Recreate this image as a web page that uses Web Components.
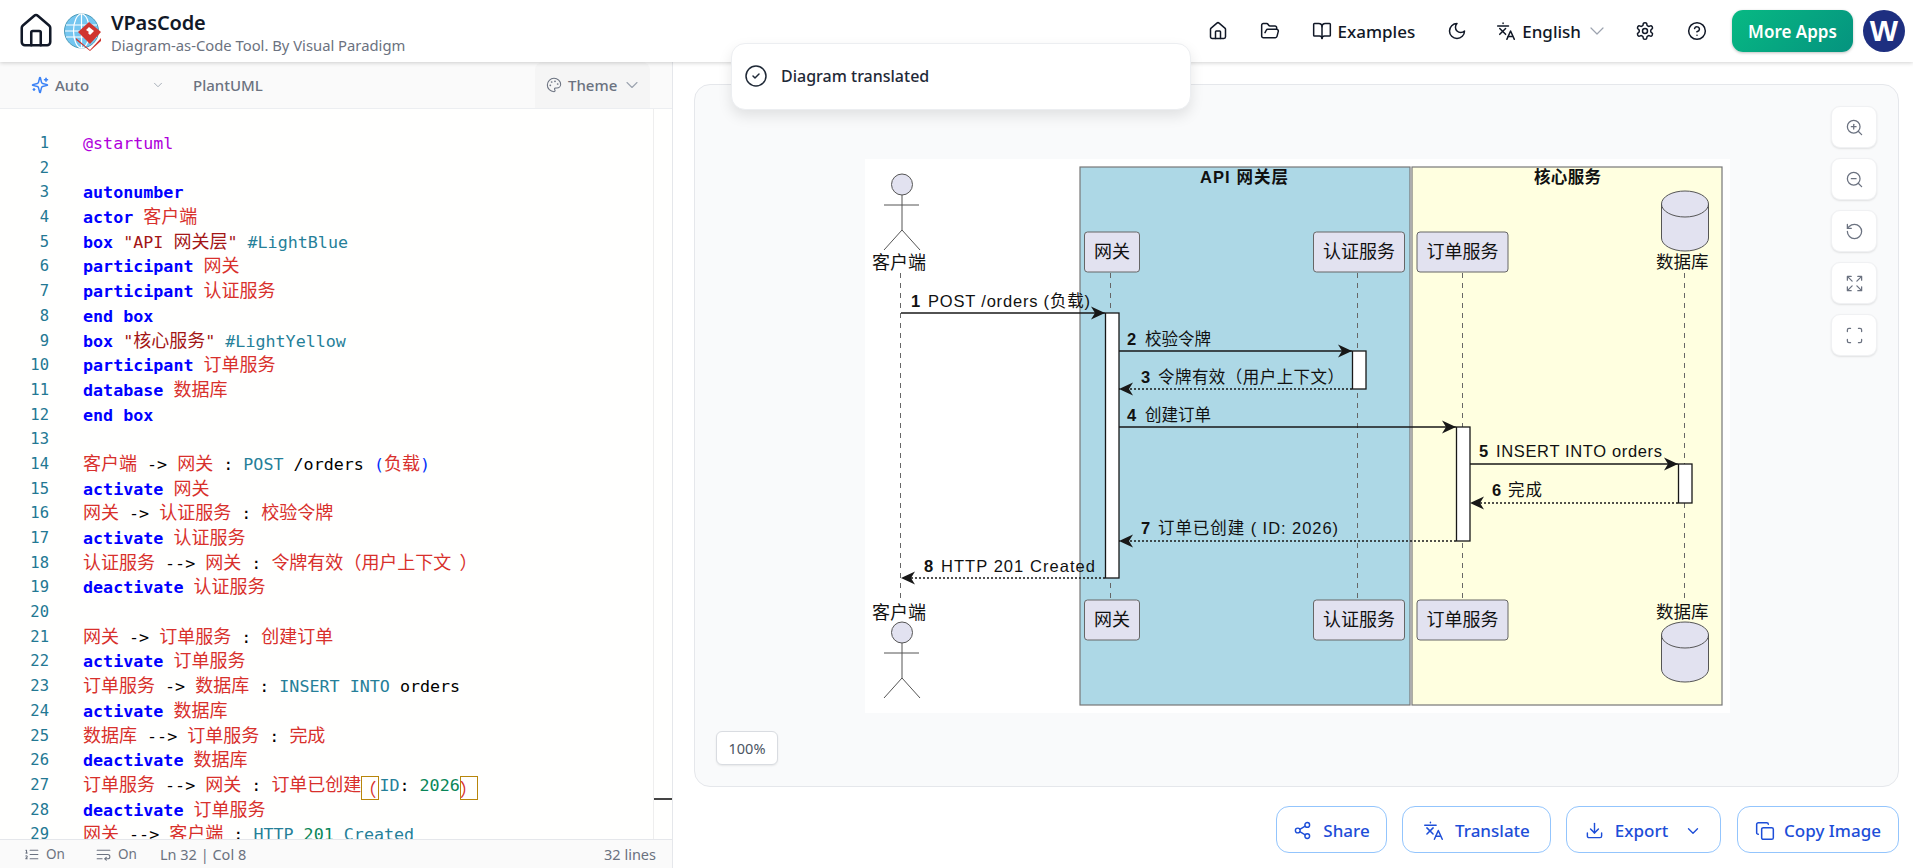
<!DOCTYPE html>
<html lang="en">
<head>
<meta charset="utf-8">
<title>VPasCode</title>
<style>
  html, body { margin: 0; height: 100%; overflow: hidden; background: #fff; }
  body { font-family: "Noto Sans", "Noto Sans CJK SC", sans-serif; color: #111827; }
</style>
</head>
<body>
<app-shell>
  <top-bar slot="top"></top-bar>
  <editor-pane slot="left"></editor-pane>
  <preview-pane slot="right"></preview-pane>
  <toast-note slot="overlay">Diagram translated</toast-note>
</app-shell>

<script>
// lucide style icon set, all on a 24 box
const ICONS = {
  house: '<path d="M15 21v-8a1 1 0 0 0-1-1h-4a1 1 0 0 0-1 1v8"/><path d="M3 10a2 2 0 0 1 .709-1.528l7-5.999a2 2 0 0 1 2.582 0l7 5.999A2 2 0 0 1 21 10v9a2 2 0 0 1-2 2H5a2 2 0 0 1-2-2z"/>',
  folder: '<path d="m6 14 1.5-2.9A2 2 0 0 1 9.24 10H20a2 2 0 0 1 1.94 2.5l-1.54 6a2 2 0 0 1-1.95 1.5H4a2 2 0 0 1-2-2V5a2 2 0 0 1 2-2h3.9a2 2 0 0 1 1.69.9l.81 1.2a2 2 0 0 0 1.69.9H18a2 2 0 0 1 2 2v2"/>',
  book: '<path d="M12 7v14"/><path d="M3 18a1 1 0 0 1-1-1V4a1 1 0 0 1 1-1h5a4 4 0 0 1 4 4 4 4 0 0 1 4-4h5a1 1 0 0 1 1 1v13a1 1 0 0 1-1 1h-6a3 3 0 0 0-3 3 3 3 0 0 0-3-3z"/>',
  moon: '<path d="M12 3a6 6 0 0 0 9 9 9 9 0 1 1-9-9Z"/>',
  lang: '<path d="M2 6h13"/><path d="M8.5 2.5v.6"/><path d="M4.5 9l7 7"/><path d="M11.5 9l-7 7"/><path d="M13 22l4.500-10 4.500 10"/><path d="M14.500 18.500h5"/>',
  gear: '<path d="M12.22 2h-.44a2 2 0 0 0-2 2v.18a2 2 0 0 1-1 1.73l-.43.25a2 2 0 0 1-2 0l-.15-.08a2 2 0 0 0-2.73.73l-.22.38a2 2 0 0 0 .73 2.73l.15.1a2 2 0 0 1 1 1.72v.51a2 2 0 0 1-1 1.74l-.15.09a2 2 0 0 0-.73 2.73l.22.38a2 2 0 0 0 2.73.73l.15-.08a2 2 0 0 1 2 0l.43.25a2 2 0 0 1 1 1.73V20a2 2 0 0 0 2 2h.44a2 2 0 0 0 2-2v-.18a2 2 0 0 1 1-1.73l.43-.25a2 2 0 0 1 2 0l.15.08a2 2 0 0 0 2.73-.73l.22-.39a2 2 0 0 0-.73-2.73l-.15-.08a2 2 0 0 1-1-1.74v-.5a2 2 0 0 1 1-1.74l.15-.09a2 2 0 0 0 .73-2.73l-.22-.38a2 2 0 0 0-2.73-.73l-.15.08a2 2 0 0 1-2 0l-.43-.25a2 2 0 0 1-1-1.73V4a2 2 0 0 0-2-2z"/><circle cx="12" cy="12" r="3"/>',
  help: '<circle cx="12" cy="12" r="10"/><path d="M9.09 9a3 3 0 0 1 5.83 1c0 2-3 3-3 3"/><path d="M12 17h.01"/>',
  sparkles: '<path d="M9.937 15.5A2 2 0 0 0 8.5 14.063l-6.135-1.582a.5.5 0 0 1 0-.962L8.5 9.936A2 2 0 0 0 9.937 8.5l1.582-6.135a.5.5 0 0 1 .963 0L14.063 8.5A2 2 0 0 0 15.5 9.937l6.135 1.581a.5.5 0 0 1 0 .964L15.5 14.063a2 2 0 0 0-1.437 1.437l-1.582 6.135a.5.5 0 0 1-.963 0z"/><path d="M20 3v4"/><path d="M22 5h-4"/><path d="M4 17v2"/><path d="M5 18H3"/>',
  palette: '<circle cx="13.5" cy="6.5" r=".5" fill="currentColor"/><circle cx="17.500" cy="10.500" r=".5" fill="currentColor"/><circle cx="8.500" cy="7.500" r=".5" fill="currentColor"/><circle cx="6.500" cy="12.500" r=".5" fill="currentColor"/><path d="M12 2C6.5 2 2 6.5 2 12s4.500 10 10 10c.926 0 1.648-.746 1.648-1.688 0-.437-.18-.835-.437-1.125-.29-.289-.438-.652-.438-1.125a1.64 1.64 0 0 1 1.668-1.668h1.996c3.051 0 5.555-2.503 5.555-5.554C21.965 6.012 17.461 2 12 2z"/>',
  chevron: '<path d="m6 9 6 6 6-6"/>',
  check: '<circle cx="12" cy="12" r="10"/><path d="m9 12 2 2 4-4"/>',
  list: '<path d="M10 12h11"/><path d="M10 18h11"/><path d="M10 6h11"/><path d="M4 10h2"/><path d="M4 6h1v4"/><path d="M6 18H4c0-1 2-2 2-3s-1-1.500-2-1"/>',
  wrap: '<path d="M3 6h18"/><path d="M3 12h15a3 3 0 1 1 0 6h-4"/><path d="m16 16-2 2 2 2"/><path d="M3 18h7"/>',
  share: '<circle cx="18" cy="5" r="3"/><circle cx="6" cy="12" r="3"/><circle cx="18" cy="19" r="3"/><path d="M8.590 13.510 15.420 17.490"/><path d="M15.410 6.510 8.590 10.490"/>',
  download: '<path d="M21 15v4a2 2 0 0 1-2 2H5a2 2 0 0 1-2-2v-4"/><path d="m7 10 5 5 5-5"/><path d="M12 15V3"/>',
  copy: '<rect x="8" y="8" width="14" height="14" rx="2"/><path d="M4 16c-1.100 0-2-.9-2-2V4c0-1.100.9-2 2-2h10c1.100 0 2 .9 2 2"/>',
  zoomin: '<circle cx="11" cy="11" r="8"/><path d="m21 21-4.300-4.300"/><path d="M11 8v6"/><path d="M8 11h6"/>',
  zoomout: '<circle cx="11" cy="11" r="8"/><path d="m21 21-4.300-4.300"/><path d="M8 11h6"/>',
  reset: '<path d="M3 12a9 9 0 1 0 9-9 9.750 9.750 0 0 0-6.740 2.740L3 8"/><path d="M3 3v5h5"/>',
  expand: '<path d="m21 21-6-6m6 6v-4.800m0 4.800h-4.800"/><path d="M3 16.200V21m0 0h4.800M3 21l6-6"/><path d="M21 7.800V3m0 0h-4.800M21 3l-6 6"/><path d="M3 7.800V3m0 0h4.800M3 3l6 6"/>',
  frame: '<path d="M3 7V5a2 2 0 0 1 2-2h2"/><path d="M17 3h2a2 2 0 0 1 2 2v2"/><path d="M21 17v2a2 2 0 0 1-2 2h-2"/><path d="M7 21H5a2 2 0 0 1-2-2v-2"/>'
};

class VIcon extends HTMLElement {
  connectedCallback() {
    const size = this.getAttribute('size') || 20;
    const sw = this.getAttribute('stroke') || 2;
    this.attachShadow({ mode: 'open' }).innerHTML = `
      <style>:host { display: inline-flex; flex: none; width: ${size}px; height: ${size}px; }</style>
      <svg width="${size}" height="${size}" viewBox="0 0 24 24" fill="none" stroke="currentColor"
           stroke-width="${sw}" stroke-linecap="round" stroke-linejoin="round">${ICONS[this.getAttribute('name')]}</svg>`;
  }
}
customElements.define('v-icon', VIcon);

class AppShell extends HTMLElement {
  constructor() {
    super();
    this.attachShadow({ mode: 'open' }).innerHTML = `
      <style>
        :host { display: flex; flex-direction: column; height: 868px; position: relative; overflow: hidden; }
        .body { flex: 1; min-height: 0; display: flex; }
        ::slotted([slot=left]) { flex: 0 0 673px; }
        ::slotted([slot=right]) { flex: 1; min-width: 0; }
      </style>
      <slot name="top"></slot>
      <div class="body"><slot name="left"></slot><slot name="right"></slot></div>
      <slot name="overlay"></slot>`;
  }
}
customElements.define('app-shell', AppShell);

class TopBar extends HTMLElement {
  constructor() {
    super();
    this.attachShadow({ mode: 'open' }).innerHTML = `
      <style>
        :host {
          display: flex; align-items: center; height: 62px; box-sizing: border-box; padding: 0 8px 0 17px;
          background: #fff; box-shadow: 0 1px 4px rgba(0,0,0,.18); position: relative; z-index: 2; color: #111827;
        }
        .brand { display: flex; align-items: center; flex: 1; }
        .logo { margin-left: 9px; }
        .names { margin-left: 9px; line-height: 1; }
        .title { font-size: 20px; font-weight: 600; color: #111827; line-height: 27px; letter-spacing: -.15px; }
        .sub { font-size: 14.800px; color: #6b7280; line-height: 18px; }
        nav { display: flex; align-items: center; gap: 32px; font-size: 17px; font-weight: 500; }
        .item { display: flex; align-items: center; gap: 6px; }
        .item.lang { margin-left: -3px; }
        .chev { color: #9ca3af; margin: 0 -6px 0 -2px; }
        .more {
          margin-left: -7px; width: 121px; height: 42px; border-radius: 11px; display: flex; align-items: center; justify-content: center;
          color: #fff; font-size: 17px; font-weight: 600; background: linear-gradient(135deg, #07b983, #05937f);
          box-shadow: 0 1px 3px rgba(0,0,0,.25);
        }
        .avatar {
          margin-left: -22px; width: 42px; height: 42px; border-radius: 50%; background: #1e2f80; color: #fff;
          display: flex; align-items: center; justify-content: center; font: 700 30px "Liberation Sans", sans-serif;
        }
      </style>
      <div class="brand">
        <v-icon name="house" size="38" stroke="1.6"></v-icon>
        <svg class="logo" width="38" height="40" viewBox="0 0 38 40">
          <circle cx="17.500" cy="20" r="17" fill="#74c6f0" stroke="#4d9bb8"/>
          <g fill="none" stroke="#fff" stroke-width="1.200">
            <ellipse cx="17.500" cy="20" rx="8" ry="17"/><path d="M17.500 3v34M2 14h31M1 20h33M2 26h31"/>
          </g>
          <path d="M25 11l12 10-11 12-12-12z" fill="#d0352f"/>
          <path d="M25 16l5 4-3 3-1 1-2-2 1-1-3-2z" fill="#fff"/>
          <path d="M12 27l14 12 11-12v3l-11 10-14-11z" fill="#d0352f"/>
        </svg>
        <div class="names"><div class="title">VPasCode</div><div class="sub">Diagram-as-Code Tool. By Visual Paradigm</div></div>
      </div>
      <nav>
        <v-icon name="house" stroke="1.800"></v-icon>
        <v-icon name="folder" stroke="1.800"></v-icon>
        <div class="item"><v-icon name="book" stroke="1.800"></v-icon><span>Examples</span></div>
        <v-icon name="moon" stroke="1.800"></v-icon>
        <div class="item lang"><v-icon name="lang" stroke="1.800"></v-icon><span>English</span><v-icon class="chev" name="chevron" size="24" stroke="1.200"></v-icon></div>
        <v-icon name="gear" stroke="1.800"></v-icon>
        <v-icon name="help" stroke="1.800"></v-icon>
        <div class="more">More Apps</div>
        <div class="avatar">W</div>
      </nav>`;
  }
}
customElements.define('top-bar', TopBar);

// tokens: k keyword, r cjk red, s string, t type teal, n number, m meta, p plain, b blue bracket, h matched bracket, e spaced bracket
const LINES = [
  [['m','@startuml']],
  [],
  [['k','autonumber']],
  [['k','actor'],['p',' '],['r','客户端']],
  [['k','box'],['p',' '],['s','"API 网关层"'],['p',' '],['t','#LightBlue']],
  [['k','participant'],['p',' '],['r','网关']],
  [['k','participant'],['p',' '],['r','认证服务']],
  [['k','end box']],
  [['k','box'],['p',' '],['s','"核心服务"'],['p',' '],['t','#LightYellow']],
  [['k','participant'],['p',' '],['r','订单服务']],
  [['k','database'],['p',' '],['r','数据库']],
  [['k','end box']],
  [],
  [['r','客户端'],['p',' -> '],['r','网关'],['p',' : '],['t','POST'],['p',' /orders '],['b','('],['r','负载'],['b',')']],
  [['k','activate'],['p',' '],['r','网关']],
  [['r','网关'],['p',' -> '],['r','认证服务'],['p',' : '],['r','校验令牌']],
  [['k','activate'],['p',' '],['r','认证服务']],
  [['r','认证服务'],['p',' --> '],['r','网关'],['p',' : '],['r','令牌有效（用户上下文'],['e','）']],
  [['k','deactivate'],['p',' '],['r','认证服务']],
  [],
  [['r','网关'],['p',' -> '],['r','订单服务'],['p',' : '],['r','创建订单']],
  [['k','activate'],['p',' '],['r','订单服务']],
  [['r','订单服务'],['p',' -> '],['r','数据库'],['p',' : '],['t','INSERT INTO'],['p',' orders']],
  [['k','activate'],['p',' '],['r','数据库']],
  [['r','数据库'],['p',' --> '],['r','订单服务'],['p',' : '],['r','完成']],
  [['k','deactivate'],['p',' '],['r','数据库']],
  [['r','订单服务'],['p',' --> '],['r','网关'],['p',' : '],['r','订单已创建'],['h o','（'],['t','ID'],['p',': '],['n','2026'],['h','）']],
  [['k','deactivate'],['p',' '],['r','订单服务']],
  [['r','网关'],['p',' --> '],['r','客户端'],['p',' : '],['t','HTTP'],['p',' '],['n','201'],['p',' '],['t','Created']]
];

class CodeView extends HTMLElement {
  constructor() {
    super();
    // editor keeps full width brackets on the full cell, the browser would trim them
    const wrap = s => s.replace(/[\u3000-\u9fff\uff00-\uffef]+/g, m => `<span class="cjk">${m.replace(/[（）]/g, p => `<span class="fw">${p}</span>`)}</span>`);
    const rows = LINES.map((toks, i) => `
      <div class="row"><span class="no">${i + 1}</span><span class="src">${toks.map(([c, s]) => `<span class="${c}">${wrap(s)}</span>`).join('')}</span></div>`).join('');
    this.attachShadow({ mode: 'open' }).innerHTML = `
      <style>
        :host { display: flex; flex: 1; min-height: 0; overflow: hidden; background: #fffffe; }
        .lines { flex: 1; padding-top: 22px; overflow: hidden; }
        .row { display: flex; height: 24.700px; white-space: pre; font: 16.700px/24.700px "DejaVu Sans Mono", monospace; color: #000; }
        .no { width: 49px; text-align: right; color: #237893; flex: none; font-size: 15.500px; }
        .src { margin-left: 34px; }
        .cjk { font-family: "Noto Sans CJK SC", sans-serif; font-size: 18px; font-weight: 400; line-height: 1; }
        .fw { display: inline-block; width: 18px; text-align: left; }
        .k { color: #0000ff; font-weight: 700; }
        .r { color: #d8302c; }
        .s { color: #a31515; }
        .t { color: #267f99; }
        .n { color: #098658; }
        .m { color: #af00db; }
        .b { color: #0431fa; }
        .e { color: #d8302c; }
        .e .fw { text-indent: 8px; }
        .h { color: #d8302c; }
        .h .fw { box-shadow: inset 0 0 0 1px #b8860b; height: 24px; line-height: 24px; vertical-align: -5px; }
        .o .fw { text-indent: -3px; }
        .ruler { flex: 0 0 18px; border-left: 1px solid #eee; position: relative; }
        .mark { position: absolute; left: 0; right: 0; top: 689px; height: 2px; background: #444; }
      </style>
      <div class="lines">${rows}</div>
      <div class="ruler"><div class="mark"></div></div>`;
  }
}
customElements.define('code-view', CodeView);

class EditorPane extends HTMLElement {
  constructor() {
    super();
    this.attachShadow({ mode: 'open' }).innerHTML = `
      <style>
        :host { display: flex; flex-direction: column; min-height: 0; border-right: 1px solid #e5e7eb; box-sizing: border-box; position: relative; color: #6b7280; }
        .bar { display: flex; align-items: center; flex: 0 0 47px; background: #fafafa; border-bottom: 1px solid #eceef1; box-sizing: border-box; font-size: 15px; font-weight: 500; }
        .auto { display: flex; align-items: center; gap: 6px; width: 134px; margin-left: 31px; }
        .auto v-icon:first-child { color: #3b82f6; }
        .auto span { width: 101px; }
        .chev { color: #9ca3af; }
        .lang { margin-left: 28px; flex: 1; }
        .theme { display: flex; align-items: center; gap: 6px; align-self: stretch; width: 115px; margin-right: 22px; padding-left: 11px; box-sizing: border-box; background: #f5f5f5; border-radius: 8px 8px 0 0; }
        .theme .chev { margin-left: -1px; }
        .status { flex: 0 0 29px; display: flex; align-items: center; background: #fafafa; border-top: 1px solid #e5e7eb; box-sizing: border-box; font-size: 14.500px; color: #6b7280; }
        .toggle { display: flex; align-items: center; gap: 6px; margin-left: 23px; width: 49px; }
        .toggle span { font-size: 13.500px; }
        .pos { margin-left: 16px; flex: 1; }
        .count { margin-right: 16px; }
      </style>
      <div class="bar">
        <div class="auto"><v-icon name="sparkles" size="18"></v-icon><span>Auto</span><v-icon class="chev" name="chevron" size="14" stroke="1.500"></v-icon></div>
        <div class="lang">PlantUML</div>
        <div class="theme"><v-icon name="palette" size="16" stroke="1.600"></v-icon><span>Theme</span><v-icon class="chev" name="chevron" size="20" stroke="1.300"></v-icon></div>
      </div>
      <code-view></code-view>
      <div class="status">
        <div class="toggle"><v-icon name="list" size="17" stroke="1.500"></v-icon><span>On</span></div>
        <div class="toggle"><v-icon name="wrap" size="17" stroke="1.500"></v-icon><span>On</span></div>
        <div class="pos">Ln 32 | Col 8</div>
        <div class="count">32 lines</div>
      </div>`;
  }
}
customElements.define('editor-pane', EditorPane);

class SequenceDiagram extends HTMLElement {
  constructor() {
    super();
    const ink = '#181818';
    const arrow = (x, y, dir) => `<path d="M${x} ${y}l${-14 * dir} -6.500l${4 * dir} 6.500l${-4 * dir} 6.500z" fill="${ink}"/>`;
    // plantuml stretches its labels with textLength, so the widths are given too
    const msg = (n, y, x1, x2, dashed, nx, tx, base, text, len) => `
      <line x1="${x1}" y1="${y}" x2="${x2}" y2="${y}" stroke="${ink}" stroke-width="1.300" ${dashed ? 'stroke-dasharray="2 2"' : ''}/>
      ${arrow(x2, y, x2 > x1 ? 1 : -1)}
      <text x="${nx}" y="${base}" font-weight="700">${n}</text><text x="${tx}" y="${base}" textLength="${len}">${text}</text>`;
    const actor = (top, labelY) => `
      <circle cx="903" cy="${top + 10.500}" r="10.500" fill="#E2E2F0" stroke="#555"/>
      <path d="M903 ${top + 21}v35M885 ${top + 31}h35M903 ${top + 56}l-18 20M903 ${top + 56}l18 20" fill="none" stroke="#555"/>
      <text x="873" y="${labelY}" font-size="18">客户端</text>`;
    const part = (x, w, y, label) => `
      <rect x="${x}" y="${y}" width="${w}" height="40" rx="3" fill="#E2E2F0" stroke="#666"/>
      <text x="${x + w / 2}" y="${y + 26}" font-size="18" text-anchor="middle">${label}</text>`;
    const cyl = (y) => `
      <path d="M1662.500 ${y + 13}a23.500 13 0 0 1 47 0v34a23.500 13 0 0 1 -47 0z" fill="#E2E2F0" stroke="#555"/>
      <path d="M1662.500 ${y + 13}a23.500 13 0 0 0 47 0" fill="none" stroke="#555"/>`;
    const life = x => `<line x1="${x}" y1="273" x2="${x}" y2="600" stroke="#666" stroke-width="1" stroke-dasharray="5 5"/>`;
    const act = (x, y, h) => `<rect x="${x}" y="${y}" width="13.500" height="${h}" fill="#fff" stroke="${ink}" stroke-width="1.300"/>`;
    this.attachShadow({ mode: 'open' }).innerHTML = `
      <style>
        :host { display: block; width: 865px; height: 554px; background: #fff; margin-left: 2px; }
        svg { display: block; }
      </style>
      <svg width="865" height="554" viewBox="866 159 865 554" font-family="'Liberation Sans','Noto Sans CJK SC',sans-serif" font-size="16.500" fill="#111">
        <rect x="1081" y="167" width="330" height="538" fill="#ADD8E6" stroke="#777" stroke-width="1.200"/>
        <rect x="1413" y="167" width="310" height="538" fill="#FFFFE0" stroke="#777" stroke-width="1.200"/>
        <text x="1201" y="183" font-weight="700" textLength="88">API 网关层</text>
        <text x="1535" y="183" font-weight="700" textLength="67">核心服务</text>
        ${life(901.500)}${life(1111.500)}${life(1358.500)}${life(1463.500)}${life(1685.500)}
        ${actor(174, 269)}${actor(622, 619)}
        ${part(1085.500, 55, 232, '网关')}${part(1314.500, 91, 232, '认证服务')}${part(1418, 91, 232, '订单服务')}
        ${part(1085.500, 55, 600, '网关')}${part(1314.500, 91, 600, '认证服务')}${part(1418, 91, 600, '订单服务')}
        ${cyl(191)}${cyl(622)}
        <text x="1657" y="268" font-size="17.500">数据库</text><text x="1657" y="618" font-size="17.500">数据库</text>
        ${act(1106.500, 313, 265)}${act(1353.500, 351, 38)}${act(1457.500, 427, 114)}${act(1679.500, 464, 39)}
        ${msg(1, 313, 902, 1106, false, 912, 929, 307, 'POST /orders (负载)', 162)}
        ${msg(2, 351, 1120, 1353, false, 1128, 1146, 345, '校验令牌', 66)}
        ${msg(3, 389, 1353, 1120, true, 1142, 1159, 383, '令牌有效（用户上下文）', 186)}
        ${msg(4, 427, 1120, 1457, false, 1128, 1146, 421, '创建订单', 66)}
        ${msg(5, 464, 1471, 1679, false, 1480, 1497, 457, 'INSERT INTO orders', 166)}
        ${msg(6, 503, 1679, 1471, true, 1493, 1509, 496, '完成', 34)}
        ${msg(7, 541, 1457, 1120, true, 1142, 1159, 534, '订单已创建 ( ID: 2026)', 180)}
        ${msg(8, 578, 1106, 902, true, 925, 942, 572, 'HTTP 201 Created', 154)}
      </svg>`;
  }
}
customElements.define('sequence-diagram', SequenceDiagram);

class ActionButton extends HTMLElement {
  constructor() {
    super();
    this.attachShadow({ mode: 'open' }).innerHTML = `
      <style>
        :host {
          display: inline-flex; align-items: center; justify-content: center; gap: 11px; height: 47px; box-sizing: border-box; padding-top: 2px;
          border: 1px solid #93c5fd; border-radius: 13px; background: #fff; color: #1d4ed8; font-size: 17px; font-weight: 500;
        }
      </style>
      <slot></slot>`;
  }
}
customElements.define('action-button', ActionButton);

class PreviewPane extends HTMLElement {
  constructor() {
    super();
    const tools = ['zoomin', 'zoomout', 'reset', 'expand', 'frame']
      .map(n => `<div class="tool"><v-icon name="${n}" size="19" stroke="1.600"></v-icon></div>`).join('');
    this.attachShadow({ mode: 'open' }).innerHTML = `
      <style>
        :host { display: flex; flex-direction: column; min-height: 0; padding: 22px 14px 0 21px; box-sizing: border-box; }
        .card {
          flex: 1; min-height: 0; position: relative; display: flex; align-items: center; justify-content: center;
          background: #f9fafb; border: 1px solid #e5e7eb; border-radius: 16px;
        }
        .tools { position: absolute; top: 21px; right: 21px; display: flex; flex-direction: column; gap: 10px; }
        .tool {
          width: 46px; height: 42px; display: flex; align-items: center; justify-content: center; background: #fff;
          border: 1px solid #f0f1f3; box-sizing: border-box; border-radius: 9px; color: #6b7280; box-shadow: 0 1px 2px rgba(0,0,0,.1);
        }
        .pct {
          position: absolute; left: 21px; bottom: 21px; width: 60px; height: 32px; display: flex; align-items: center; justify-content: center;
          background: #fff; border: 1px solid #d9dce1; border-radius: 6px; font-size: 14.500px; color: #4b5563; box-shadow: 0 1px 2px rgba(0,0,0,.08);
        }
        .actions { flex: 0 0 81px; display: flex; justify-content: flex-end; align-items: flex-start; padding-top: 19px; gap: 15px; box-sizing: border-box; }
        .share { width: 111px; } .translate { width: 149px; } .export { width: 155px; } .copy { width: 162px; gap: 9px; margin-left: 1px; }
        .export v-icon:last-child { margin-left: 5px; }
      </style>
      <div class="card">
        <sequence-diagram></sequence-diagram>
        <div class="tools">${tools}</div>
        <div class="pct">100%</div>
      </div>
      <div class="actions">
        <action-button class="share"><v-icon name="share" size="19" stroke="1.800"></v-icon>Share</action-button>
        <action-button class="translate"><v-icon name="lang" size="21" stroke="1.700"></v-icon>Translate</action-button>
        <action-button class="export"><v-icon name="download" size="19" stroke="1.800"></v-icon>Export<v-icon name="chevron" size="18" stroke="1.800"></v-icon></action-button>
        <action-button class="copy"><v-icon name="copy" size="20" stroke="1.800"></v-icon>Copy Image</action-button>
      </div>`;
  }
}
customElements.define('preview-pane', PreviewPane);

class ToastNote extends HTMLElement {
  constructor() {
    super();
    this.attachShadow({ mode: 'open' }).innerHTML = `
      <style>
        :host {
          position: absolute; left: 731px; top: 43px; width: 460px; height: 67px; box-sizing: border-box; z-index: 5;
          display: flex; align-items: center; gap: 13px; padding: 0 0 1px 12px; background: #fff; border: 1px solid #eceef1;
          border-radius: 14px; box-shadow: 0 6px 14px rgba(0,0,0,.1); font-size: 16px; font-weight: 500; color: #1f2937;
        }
      </style>
      <v-icon name="check" size="24" stroke="1.500"></v-icon><slot></slot>`;
  }
}
customElements.define('toast-note', ToastNote);
</script>
</body>
</html>
